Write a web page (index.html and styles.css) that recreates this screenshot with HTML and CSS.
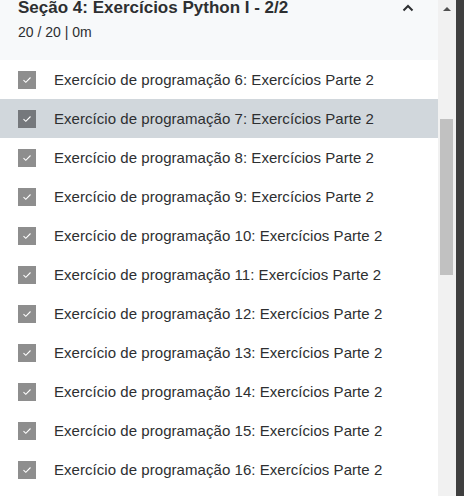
FILE: index.html
```html
<!DOCTYPE html>
<html lang="pt">
<head>
<meta charset="utf-8">
<link rel="stylesheet" href="styles.css">
</head>
<body>
<div class="page">
  <div class="panel">
    <div class="section-head">
      <div class="head-text">
        <div class="title">Seção 4: Exercícios Python I - 2/2</div>
        <div class="meta">20 / 20 | 0m</div>
      </div>
      <svg class="chevron" width="12" height="8" viewBox="0 0 12 8"><path d="M1.5 6.5 L6 2 L10.5 6.5" fill="none" stroke="#2d2f31" stroke-width="2"/></svg>
    </div>
    <ul class="items">
      <li class="item"><span class="check"><svg width="10" height="8" viewBox="0 0 10 8"><path d="M1.5 4.2 L3.8 6.3 L8.5 1.5" fill="none" stroke="#fff" stroke-width="1.1"/></svg></span><span class="label">Exercício de programação 6: Exercícios Parte 2</span></li>
      <li class="item active"><span class="check"><svg width="10" height="8" viewBox="0 0 10 8"><path d="M1.5 4.2 L3.8 6.3 L8.5 1.5" fill="none" stroke="#fff" stroke-width="1.1"/></svg></span><span class="label">Exercício de programação 7: Exercícios Parte 2</span></li>
      <li class="item"><span class="check"><svg width="10" height="8" viewBox="0 0 10 8"><path d="M1.5 4.2 L3.8 6.3 L8.5 1.5" fill="none" stroke="#fff" stroke-width="1.1"/></svg></span><span class="label">Exercício de programação 8: Exercícios Parte 2</span></li>
      <li class="item"><span class="check"><svg width="10" height="8" viewBox="0 0 10 8"><path d="M1.5 4.2 L3.8 6.3 L8.5 1.5" fill="none" stroke="#fff" stroke-width="1.1"/></svg></span><span class="label">Exercício de programação 9: Exercícios Parte 2</span></li>
      <li class="item"><span class="check"><svg width="10" height="8" viewBox="0 0 10 8"><path d="M1.5 4.2 L3.8 6.3 L8.5 1.5" fill="none" stroke="#fff" stroke-width="1.1"/></svg></span><span class="label">Exercício de programação 10: Exercícios Parte 2</span></li>
      <li class="item"><span class="check"><svg width="10" height="8" viewBox="0 0 10 8"><path d="M1.5 4.2 L3.8 6.3 L8.5 1.5" fill="none" stroke="#fff" stroke-width="1.1"/></svg></span><span class="label">Exercício de programação 11: Exercícios Parte 2</span></li>
      <li class="item"><span class="check"><svg width="10" height="8" viewBox="0 0 10 8"><path d="M1.5 4.2 L3.8 6.3 L8.5 1.5" fill="none" stroke="#fff" stroke-width="1.1"/></svg></span><span class="label">Exercício de programação 12: Exercícios Parte 2</span></li>
      <li class="item"><span class="check"><svg width="10" height="8" viewBox="0 0 10 8"><path d="M1.5 4.2 L3.8 6.3 L8.5 1.5" fill="none" stroke="#fff" stroke-width="1.1"/></svg></span><span class="label">Exercício de programação 13: Exercícios Parte 2</span></li>
      <li class="item"><span class="check"><svg width="10" height="8" viewBox="0 0 10 8"><path d="M1.5 4.2 L3.8 6.3 L8.5 1.5" fill="none" stroke="#fff" stroke-width="1.1"/></svg></span><span class="label">Exercício de programação 14: Exercícios Parte 2</span></li>
      <li class="item"><span class="check"><svg width="10" height="8" viewBox="0 0 10 8"><path d="M1.5 4.2 L3.8 6.3 L8.5 1.5" fill="none" stroke="#fff" stroke-width="1.1"/></svg></span><span class="label">Exercício de programação 15: Exercícios Parte 2</span></li>
      <li class="item"><span class="check"><svg width="10" height="8" viewBox="0 0 10 8"><path d="M1.5 4.2 L3.8 6.3 L8.5 1.5" fill="none" stroke="#fff" stroke-width="1.1"/></svg></span><span class="label">Exercício de programação 16: Exercícios Parte 2</span></li>
    </ul>
  </div>
  <div class="scrollbar">
    <div class="arrow-up"></div>
    <div class="thumb"></div>
  </div>
  <div class="edge"></div>
</div>
</body>
</html>
```
FILE: styles.css
```css
html, body {
  margin: 0;
  padding: 0;
  background: #ffffff;
}
body {
  font-family: "Liberation Sans", Arial, sans-serif;
  color: #2d2f31;
}
.page {
  display: flex;
  width: 464px;
  height: 496px;
  overflow: hidden;
}
.panel {
  width: 438px;
  flex: none;
  background: #fff;
}
.section-head {
  height: 60px;
  box-sizing: border-box;
  background: #f7f9fa;
  display: flex;
  justify-content: space-between;
  align-items: flex-start;
  padding: 0 24px 0 18px;
}
.title {
  font-size: 17px;
  font-weight: 700;
  line-height: 17px;
  margin-top: -1px;
}
.meta {
  font-size: 14px;
  line-height: 16px;
  margin-top: 8px;
}
.chevron {
  margin-top: 4px;
}
.items {
  list-style: none;
  margin: 0;
  padding: 0;
}
.item {
  height: 39px;
  display: flex;
  align-items: center;
  padding-left: 18px;
}
.item.active {
  background: #d1d7dc;
}
.check {
  width: 18px;
  height: 18px;
  background: #8e8e8e;
  display: flex;
  align-items: center;
  justify-content: center;
  flex: none;
}
.item.active .check {
  background: #75787c;
}
.label {
  margin-left: 18px;
  font-size: 15px;
  letter-spacing: 0.05px;
  white-space: nowrap;
}
.scrollbar {
  width: 18px;
  flex: none;
  background: #f1f1f1;
  position: relative;
}
.arrow-up {
  width: 0;
  height: 0;
  margin: 7px auto 0;
  border-left: 4px solid transparent;
  border-right: 4px solid transparent;
  border-bottom: 4px solid #505050;
}
.thumb {
  position: absolute;
  left: 2px;
  top: 119px;
  width: 13px;
  height: 156px;
  background: #c1c1c1;
}
.edge {
  width: 8px;
  flex: none;
  background: #3f3f3f;
}
```
